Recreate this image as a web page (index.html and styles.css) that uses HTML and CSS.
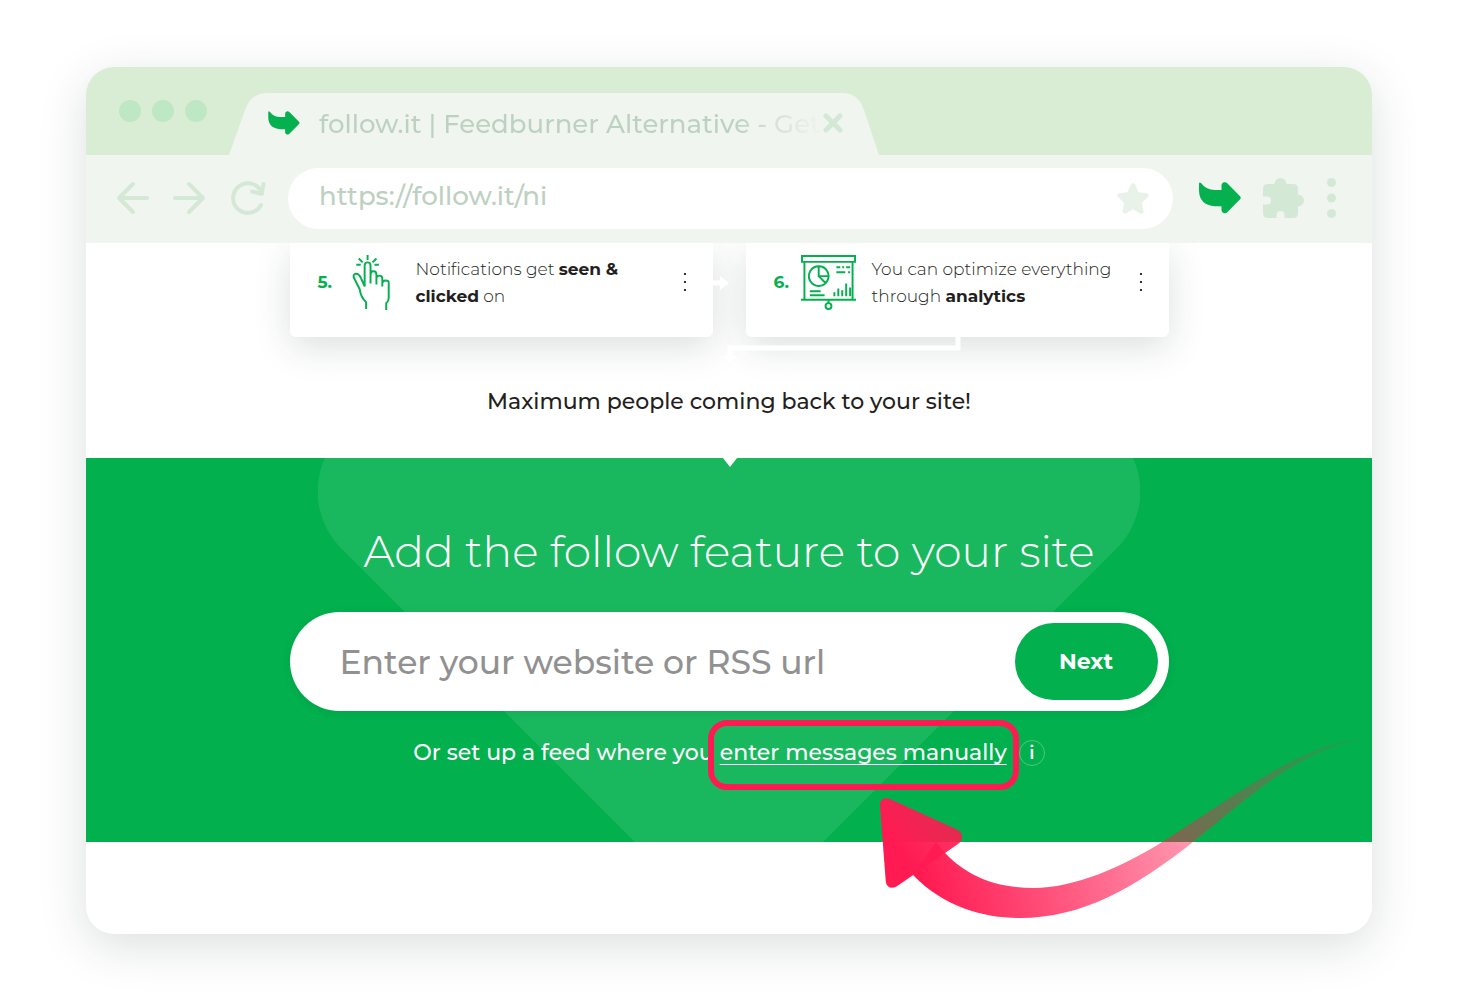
FILE: index.html
```html
<!DOCTYPE html>
<html lang="en">
<head>
    <meta charset="UTF-8">
    <meta name="viewport" content="width=device-width, initial-scale=1">
    <title>follow.it | Feedburner Alternative</title>
    <link rel="stylesheet" href="styles.css">
</head>
<body>
<svg class="sprite" aria-hidden="true">
    <symbol id="follow" viewBox="0 0 42 32">
        <path d="M0 1.5Q.5-.3 2 1 7 8 16 8h6.5V3.5Q22.5.5 25.5.3 27 .2 28.5 1.5L41 14.2q1.5 1.5 0 3L28.500 30q-1.500 1.500-3.500 1.200-2.500-.5-2.500-3V24.300H16Q0 23 0 8z"/>
    </symbol>
    <symbol id="more" viewBox="0 0 4 20">
        <circle cx="2" cy="2" r="1.100"/>
        <circle cx="2" cy="10" r="1.100"/>
        <circle cx="2" cy="18" r="1.100"/>
    </symbol>
</svg>
<div class="window">
    <header class="tab-bar">
        <div class="lights"><span></span><span></span><span></span></div>
        <div class="tab">
            <svg class="tab-shape" viewBox="0 0 650 62" preserveAspectRatio="none">
                <path d="M0 62 16 17Q22 0 38 0H614q15 0 21 17l15 45z"/>
            </svg>
            <svg class="tab-icon"><use href="#follow"/></svg>
            <span class="tab-title">follow.it | Feedburner Alternative - Get</span>
            <button class="tab-close" type="button" aria-label="Close tab">
                <svg viewBox="0 0 20 20"><path d="M3 3l14 14M17 3 3 17"/></svg>
            </button>
        </div>
    </header>
    <nav class="toolbar">
        <button class="tool" type="button" aria-label="Back">
            <svg class="line" width="34" height="34" viewBox="0 0 34 34">
                <path d="M17 3 3 17l14 14M3 17h28"/>
            </svg>
        </button>
        <button class="tool" type="button" aria-label="Forward">
            <svg class="line" width="34" height="34" viewBox="0 0 34 34">
                <path d="m17 3 14 14-14 14M31 17H3"/>
            </svg>
        </button>
        <button class="tool" type="button" aria-label="Reload">
            <svg class="line" width="38" height="36" viewBox="0 0 38 36">
                <path d="M33 25A14.800 14.800 0 1 1 32 9.500l2 4M35.500 4l-1.800 10-9.500-2.500"/>
            </svg>
        </button>
        <div class="address">
            <input type="text" aria-label="Address" value="https://follow.it/ni">
            <svg width="32" height="31" viewBox="0 0 32 31">
                <path d="M13.800 1.600q2.200-3.200 4.400 0l3.400 7.600 8.300 1q3.200 1 1 3.700L24.800 20l1.700 8.200q-.2 3.300-3.500 2.300l-7-4.200-7 4.200q-3.300 1-3.500-2.300L7.200 20l-6.100-6.100q-2.200-2.700 1-3.700l8.300-1z"/>
            </svg>
        </div>
        <button class="tool tool-follow" type="button" aria-label="follow.it">
            <svg width="42" height="32"><use href="#follow"/></svg>
        </button>
        <button class="tool" type="button" aria-label="Extensions">
            <svg width="42" height="42" viewBox="0 1 42 42">
                <path d="M5 8h6.500a6 6 0 0 1 12 0H30q5 0 5 5v5.500a6 6 0 0 1 0 12V37q0 5-5 5h-8.500v-3a4 4 0 0 0-8 0v3H5q-5 0-5-5v-8.500h4a4 4 0 0 0 0-8H0V13q0-5 5-5z"/>
            </svg>
        </button>
        <button class="tool" type="button" aria-label="Menu">
            <svg width="9" height="40" viewBox="0 0 9 40">
                <circle cx="4.500" cy="4.500" r="4.500"/>
                <circle cx="4.500" cy="20" r="4.500"/>
                <circle cx="4.500" cy="35.500" r="4.500"/>
            </svg>
        </button>
    </nav>
    <main>
        <section class="steps">
            <div class="cards">
                <article class="card">
                    <span class="card-number">5.</span>
                    <svg class="card-icon" viewBox="-7 0 56 56">
                        <path d="M14.500 55v-7Q9 43 8 35L3 25q-3-5 1-6Q7.500 19 9.500 24l3.500 8V11q0-3.500 3-3.500t3 3.500v18-9q0-3.500 3-3.500t3 3.500v10-6q0-3 3-3t3 3v8-3q0-3 3.500-3t3 3v15q0 3-2.500 5v7M16 0v5M7 3.500l4 4M25 3.500l-4 4M4.500 10H9M23 10h4.500"/>
                    </svg>
                    <p>Notifications get <b>seen &amp;<br>clicked</b> on</p>
                    <button class="card-more" type="button" aria-label="More about notifications">
                        <svg><use href="#more"/></svg>
                    </button>
                </article>
                <article class="card">
                    <span class="card-number">6.</span>
                    <svg class="card-icon" viewBox="0 0 56 56">
                        <path d="M1 1h54v6H1zM3.500 7v38M52.500 7v38M0 45.500h56M28 46v3M18 11.500a10 10 0 1 0 .1 0zM18 11.500v10h10M18 21.500l7 7M36 12.500h4m2 0h2m2 0h4M36 17.500h9m3 0h2M9 37h11M9 41h15M34 42v-4M38 42v-8M42 42v-6M46 42V29M50 42v-9"/>
                        <circle cx="28" cy="52" r="3"/>
                    </svg>
                    <p>You can optimize everything<br>through <b>analytics</b></p>
                    <button class="card-more" type="button" aria-label="More about analytics">
                        <svg><use href="#more"/></svg>
                    </button>
                </article>
                <svg class="connectors" width="248" height="86" viewBox="0 0 248 86">
                    <path d="M0 2h8M246 56v11H18v9"/>
                    <path class="head" d="M8-5 17 2 8 9zM11 75h14l-7 9z"/>
                </svg>
            </div>
            <p class="steps-result">Maximum people coming back to your site!</p>
        </section>
        <section class="banner">
            <svg class="banner-shape" width="822" height="384" viewBox="0 0 822 384">
                <path d="M7 0A80 80 0 0 0 24 91L317 384H505L798 91A80 80 0 0 0 815 0z"/>
            </svg>
            <h1>Add the follow feature to your site</h1>
            <form class="feed-form">
                <input type="text" aria-label="Website or RSS url" placeholder="Enter your website or RSS url">
                <button type="submit">Next</button>
            </form>
            <p class="hint">
                <span>Or set up a feed where you</span>
                <span class="marked">
                    <a href="#manual">enter messages manually</a>
                    <svg class="pointer" width="512" height="214" viewBox="0 0 512 214">
                        <defs>
                            <linearGradient id="tail" gradientUnits="userSpaceOnUse" x1="60" y1="150" x2="530" y2="10">
                                <stop offset="0" stop-color="#ff1b52"/>
                                <stop offset="1" stop-color="#ff1b52" stop-opacity="0"/>
                            </linearGradient>
                            <linearGradient id="tip" gradientUnits="userSpaceOnUse" x1="48" y1="140" x2="100" y2="100">
                                <stop offset="0" stop-color="#ff1b52"/>
                                <stop offset="1" stop-color="#ff1b52" stop-opacity=".88"/>
                            </linearGradient>
                        </defs>
                        <path fill="url(#tip)" d="M20 86q-.5-5 3-7 3-1.500 8 .5L98 110q4 2 4 7 0 4-4 7l-60 41.500q-4 3-8 2-4-1.500-4.300-7z"/>
                        <path fill="url(#tail)" d="M53 155C85 188 125 198 160 198c62 0 115-30 173-76C400 68 440 30 510 17 440 22 370 80 302 122c-40 25-87 46-129 46-38 0-73-13-97-46z"/>
                    </svg>
                </span>
                <button class="info" type="button" aria-label="About manual messages">i</button>
            </p>
        </section>
    </main>
</div>
</body>
</html>
```
FILE: styles.css
```css
*,
*::before,
*::after {
    box-sizing: border-box;
}

body {
    font-family: Montserrat, Inter, sans-serif;
    font-weight: 500;
    margin: 0;
    padding: 67px 86px 66px;
    color: #231f20;
    background-color: #fff;
}

h1,
p {
    margin: 0;
}

button,
input {
    font-family: inherit;
    font-weight: inherit;
    padding: 0;
    border: 0;
    outline: 0;
    background: none;
}

button {
    cursor: pointer;
}

svg {
    display: block;
}

.sprite {
    position: absolute;
    width: 0;
    height: 0;
}

.window {
    overflow: hidden;
    border-radius: 28px;
    background-color: #fff;
    box-shadow: 0 12px 48px rgba(20, 45, 35, 0.15);
}

.tab-bar {
    display: flex;
    align-items: flex-end;
    gap: 22px;
    height: 88px;
    padding-left: 33px;
    background-color: #d9edd4;
}

.lights {
    display: flex;
    gap: 11px;
    padding-bottom: 33px;
}

.lights span {
    width: 22px;
    height: 22px;
    border-radius: 50%;
    background-color: #bde8c3;
}

.tab {
    position: relative;
    display: flex;
    align-items: center;
    width: 650px;
    height: 62px;
    padding: 0 36px 2px 39px;
}

.tab-shape {
    position: absolute;
    top: 0;
    left: 0;
    width: 100%;
    height: 100%;
    fill: #f0f5ef;
}

.tab-icon {
    position: relative;
    flex: none;
    width: 32px;
    height: 24px;
    fill: #05b04e;
}

.tab-title {
    font-size: 26px;
    position: relative;
    flex: 1;
    min-width: 0;
    margin-left: 19px;
    padding-top: 1px;
    white-space: nowrap;
    color: transparent;
    background: linear-gradient(90deg, #bcd1bf 82%, #f0f5ef 100%);
    background-clip: text;
}

.tab-close {
    position: relative;
    width: 20px;
    height: 20px;
}

.tab-close svg {
    fill: none;
    stroke: #d3e9d6;
    stroke-width: 5;
    stroke-linecap: round;
}

.toolbar {
    display: flex;
    align-items: center;
    gap: 22px;
    height: 88px;
    padding: 0 36px 2px 30px;
    background-color: #f0f5ef;
}

.tool {
    fill: #d3e9d6;
}

.tool .line {
    fill: none;
    stroke: #d3e9d6;
    stroke-width: 4;
    stroke-linecap: round;
    stroke-linejoin: round;
}

.tool-follow {
    margin-left: 4px;
    fill: #05b04e;
}

.address {
    display: flex;
    align-items: center;
    flex: 1;
    height: 61px;
    padding: 0 24px 0 31px;
    border-radius: 31px;
    background-color: #fff;
    fill: #e9f2e8;
}

.address input {
    font-size: 26px;
    flex: 1;
    min-width: 0;
    padding-bottom: 4px;
    color: #bcd1bf;
}

.steps {
    overflow: hidden;
    padding-bottom: 41px;
}

.cards {
    position: relative;
    display: grid;
    grid-template-columns: 1fr 1fr;
    gap: 33px;
    max-width: 879px;
    margin: 0 auto;
}

.card {
    display: flex;
    align-items: flex-start;
    height: 94px;
    padding: 12px 26px 0 28px;
    border-radius: 0 0 6px 6px;
    background-color: #fff;
    box-shadow: 0 10px 36px rgba(20, 45, 35, 0.15);
}

.card-number {
    font-size: 17px;
    font-weight: 700;
    line-height: 54px;
    width: 27px;
    color: #05b04e;
}

.card-icon {
    flex: none;
    width: 55px;
    height: 55px;
    fill: none;
    stroke: #05b04e;
    stroke-width: 2;
}

.card p {
    font-size: 17px;
    font-weight: 300;
    line-height: 27px;
    flex: 1;
    margin-left: 16px;
    padding-top: 1px;
    white-space: nowrap;
}

.card b {
    font-weight: 700;
}

.card-more {
    padding: 17px 0;
}

.card-more svg {
    width: 4px;
    height: 20px;
}

.connectors {
    position: absolute;
    top: 38px;
    left: calc(50% - 17px);
    overflow: visible;
    fill: none;
    stroke: #fff;
    stroke-width: 5;
}

.connectors .head {
    fill: #fff;
    stroke: none;
}

.steps-result {
    font-size: 22px;
    line-height: 30px;
    margin-top: 50px;
    text-align: center;
}

.banner {
    position: relative;
    display: flex;
    align-items: center;
    flex-direction: column;
    margin-bottom: 92px;
    padding: 63px 24px 74px;
    color: #fff;
    background-color: #02b04e;
}

.banner::after {
    position: absolute;
    top: 0;
    left: calc(50% - 6px);
    width: 14px;
    height: 9px;
    content: "";
    background-color: #fff;
    clip-path: polygon(0 0, 100% 0, 50% 100%);
}

.banner-shape {
    position: absolute;
    top: 0;
    left: calc(50% - 411px);
    fill: #1ab85e;
}

.banner h1 {
    font-size: 44px;
    font-weight: 300;
    line-height: 60px;
    position: relative;
}

.feed-form {
    position: relative;
    display: flex;
    width: 100%;
    max-width: 879px;
    height: 99px;
    margin-top: 31px;
    padding: 11px 11px 11px 50px;
    border-radius: 50px;
    background-color: #fff;
    box-shadow: 0 2px 8px rgba(0, 60, 20, 0.1);
}

.feed-form input {
    font-size: 33px;
    flex: 1;
    min-width: 0;
}

.feed-form input::placeholder {
    opacity: 1;
    color: #919191;
}

.feed-form button {
    font-size: 22px;
    font-weight: 700;
    width: 143px;
    border-radius: 39px;
    color: #fff;
    background-color: #02b04e;
}

.hint {
    font-size: 22px;
    line-height: 30px;
    position: relative;
    display: flex;
    align-items: center;
    gap: 6px;
    margin-top: 27px;
    white-space: nowrap;
}

.marked {
    position: relative;
}

.marked a {
    text-decoration: underline;
    text-decoration-thickness: 1px;
    text-underline-offset: 4px;
    color: inherit;
}

/* ring around the link, wider than the text it marks */
.marked::after {
    position: absolute;
    top: -18px;
    right: -12px;
    left: -12px;
    height: 70px;
    content: "";
    pointer-events: none;
    border: 6px solid #ff1b52;
    border-radius: 19px;
}

.pointer {
    position: absolute;
    z-index: 1;
    top: -18px;
    left: 140px;
    pointer-events: none;
}

.info {
    font-size: 18px;
    font-weight: 600;
    width: 26px;
    height: 26px;
    margin-left: 6px;
    color: #fff;
    border: 1px solid #4dc882;
    border-radius: 50%;
}
```
